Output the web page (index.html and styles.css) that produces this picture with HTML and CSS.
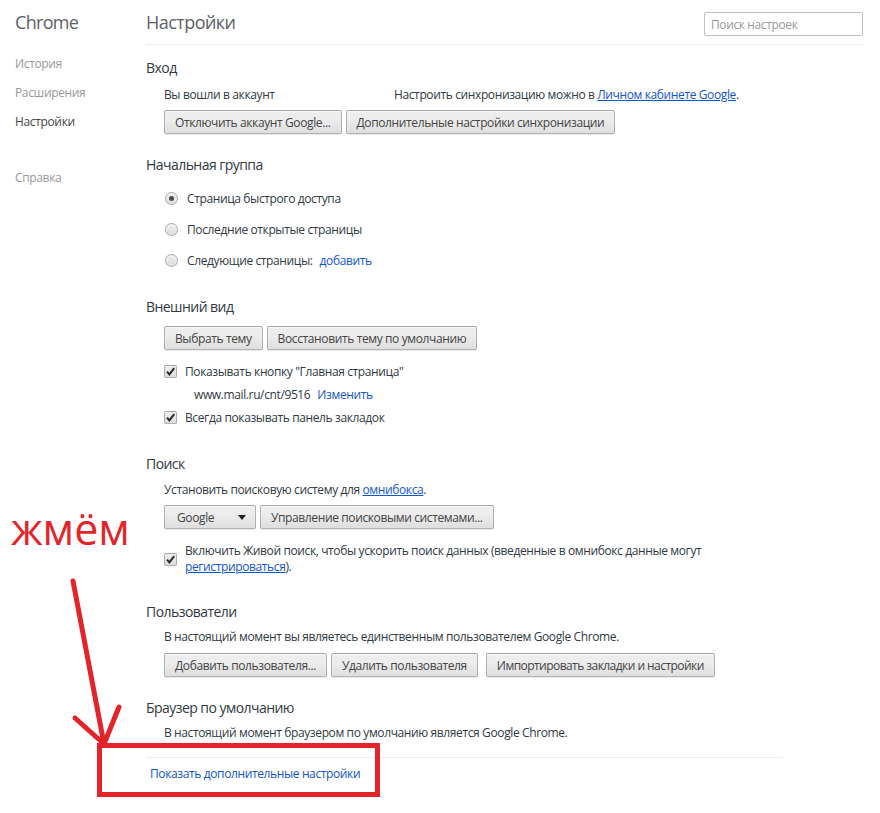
FILE: index.html
```html
<!DOCTYPE html>
<html lang="ru">
<head>
<meta charset="utf-8">
<title>Настройки</title>
<link rel="stylesheet" href="styles.css">
</head>
<body>
<div class="app">
  <nav class="sidebar">
    <div class="brand">Chrome</div>
    <ul class="nav">
      <li>История</li>
      <li>Расширения</li>
      <li class="active">Настройки</li>
      <li class="gap">Справка</li>
    </ul>
  </nav>
  <main class="page">
    <header class="page-header">
      <h1>Настройки</h1>
      <input class="search" type="text" placeholder="Поиск настроек">
    </header>

    <section class="section s-login">
      <h3>Вход</h3>
      <div class="body">
        <div class="row r-first"><span class="account">Вы вошли в аккаунт</span><span>Настроить синхронизацию можно в <a class="u" href="#">Личном кабинете Google</a>.</span></div>
        <div class="buttons b5"><button>Отключить аккаунт Google...</button><button>Дополнительные настройки синхронизации</button></div>
      </div>
    </section>

    <section class="section s-start">
      <h3>Начальная группа</h3>
      <div class="body radios">
        <div class="radio-row"><span class="radio checked"></span>Страница быстрого доступа</div>
        <div class="radio-row"><span class="radio"></span>Последние открытые страницы</div>
        <div class="radio-row"><span class="radio"></span>Следующие страницы:<a class="add" href="#">добавить</a></div>
      </div>
    </section>

    <section class="section s-look">
      <h3>Внешний вид</h3>
      <div class="body">
        <div class="buttons b9"><button>Выбрать тему</button><button>Восстановить тему по умолчанию</button></div>
        <div class="checks">
          <div class="check-row"><span class="checkbox"><svg viewBox="0 0 13 13" width="13" height="13"><path d="M3 6.6 L5.4 9.4 L10.2 3.2" fill="none" stroke="#2a2a2a" stroke-width="2"/></svg></span>Показывать кнопку "Главная страница"</div>
          <div class="check-row home-url">www.mail.ru/cnt/9516<a class="add" href="#">Изменить</a></div>
          <div class="check-row"><span class="checkbox"><svg viewBox="0 0 13 13" width="13" height="13"><path d="M3 6.6 L5.4 9.4 L10.2 3.2" fill="none" stroke="#2a2a2a" stroke-width="2"/></svg></span>Всегда показывать панель закладок</div>
        </div>
      </div>
    </section>

    <section class="section s-search">
      <h3>Поиск</h3>
      <div class="body">
        <div class="row r-first6">Установить поисковую систему для <a class="u" href="#">омнибокса</a>.</div>
        <div class="buttons b5">
          <div class="select">Google<svg class="caret" viewBox="0 0 8 5" width="8" height="5"><path d="M0 0 H8 L4 5 Z" fill="#222"/></svg></div>
          <button>Управление поисковыми системами...</button>
        </div>
        <div class="live">
          <span class="checkbox"><svg viewBox="0 0 13 13" width="13" height="13"><path d="M3 6.6 L5.4 9.4 L10.2 3.2" fill="none" stroke="#2a2a2a" stroke-width="2"/></svg></span>
          <span class="live-text">Включить Живой поиск, чтобы ускорить поиск данных (введенные в омнибокс данные могут<br><a class="u" href="#">регистрироваться</a>).</span>
        </div>
      </div>
    </section>

    <section class="section s-users">
      <h3>Пользователи</h3>
      <div class="body">
        <div class="row r-first5">В настоящий момент вы являетесь единственным пользователем Google Chrome.</div>
        <div class="buttons b6"><button>Добавить пользователя...</button><button>Удалить пользователя</button><button class="tight">Импортировать закладки и настройки</button></div>
      </div>
    </section>

    <section class="section s-default">
      <h3>Браузер по умолчанию</h3>
      <div class="body">
        <div class="row r-first5">В настоящий момент браузером по умолчанию является Google Chrome.</div>
      </div>
    </section>

    <footer class="more">
      <a href="#">Показать дополнительные настройки</a>
    </footer>
  </main>
</div>

<div class="annotation">
  <div class="press">жмём</div>
  <svg class="marks" viewBox="0 0 880 813" width="880" height="813">
    <g stroke="#e3242b" stroke-width="5" stroke-linecap="round" fill="none">
      <line x1="73" y1="581" x2="104" y2="744"/>
      <line x1="75" y1="718" x2="104" y2="744"/>
      <line x1="119" y1="707" x2="104" y2="744"/>
      <rect x="99.5" y="745.5" width="278" height="49" stroke-linecap="butt"/>
    </g>
  </svg>
</div>
</body>
</html>
```

FILE: styles.css
```css
* { box-sizing: border-box; }
html, body { margin: 0; padding: 0; background: #fff; }
body {
  position: relative;
  width: 880px;
  height: 813px;
  overflow: hidden;
  font-family: "Open Sans", "Noto Sans", sans-serif;
  font-size: 12px;
  letter-spacing: -0.38px;
  color: #303942;
}
a { color: #15c; text-decoration: none; }
a.u { text-decoration: underline; }

.app { display: flex; align-items: flex-start; }

.sidebar { width: 146px; flex: none; padding-left: 15px; }
.brand { margin-top: 10px; font-size: 18px; line-height: 24px; letter-spacing: -0.7px; color: #5c6166; }
.nav { list-style: none; margin: 15px 0 0; padding: 0; }
.nav li { line-height: 29px; font-size: 12px; letter-spacing: -0.35px; color: #999; }
.nav li.active { color: #464646; }
.nav li.gap { margin-top: 27px; }

.page { flex: none; width: 717px; }
.page-header {
  height: 45px;
  display: flex;
  justify-content: space-between;
  align-items: flex-start;
  border-bottom: 1px solid #eee;
}
.page-header h1 {
  margin: 10px 0 0;
  font-size: 18px;
  line-height: 24px;
  letter-spacing: -0.55px;
  font-weight: normal;
  color: #5c6166;
}
.search {
  margin-top: 12px;
  width: 159px;
  height: 24px;
  border: 1px solid #bfbfbf;
  border-radius: 2px;
  padding: 0 6px;
  font: inherit;
  font-size: 12px;
  letter-spacing: -0.38px;
  color: #333;
  outline: none;
}
.search::placeholder { color: #999; }

.section h3 {
  margin: 0;
  font-size: 14px;
  line-height: 20px;
  letter-spacing: -0.55px;
  font-weight: normal;
  color: #303942;
}
.section .body { padding-left: 18px; }
.s-login { margin-top: 13px; }
.s-start { margin-top: 21px; }
.s-look { margin-top: 21px; }
.s-search { margin-top: 25px; }
.s-users { margin-top: 27px; }
.s-default { margin-top: 21px; }

.row { line-height: 20px; white-space: nowrap; }
.r-first { margin-top: 7px; }
.r-first6 { margin-top: 6px; }
.r-first5 { margin-top: 5px; }
.account { display: inline-block; width: 230px; }

.buttons { display: flex; gap: 4px; }
.b5 { margin-top: 5px; }
.b6 { margin-top: 6px; }
.b9 { margin-top: 9px; }
button, .select {
  height: 24px;
  padding: 0 10px;
  font: inherit;
  font-size: 12px;
  letter-spacing: -0.38px;
  color: #444;
  border: 1px solid rgba(0,0,0,0.25);
  border-radius: 2px;
  background: linear-gradient(#ededed, #ededed 38%, #dedede);
  box-shadow: 0 1px 0 rgba(0,0,0,0.08), inset 0 1px 2px rgba(255,255,255,0.75);
  white-space: nowrap;
}
button.tight { margin-left: 4px; letter-spacing: -0.55px; }
.select {
  width: 92px;
  display: flex;
  align-items: center;
  justify-content: space-between;
  padding: 0 9px 0 12px;
}

.radios { margin-top: 8px; }
.radio-row { height: 31px; display: flex; align-items: center; }
.radio {
  width: 13px; height: 13px;
  margin: 0 9px 0 1px;
  border-radius: 50%;
  border: 1px solid rgba(0,0,0,0.25);
  background: linear-gradient(#ededed, #dedede);
  box-shadow: inset 0 1px 2px rgba(255,255,255,0.75);
  display: flex; align-items: center; justify-content: center;
}
.radio.checked::after {
  content: "";
  width: 5px; height: 5px;
  border-radius: 50%;
  background: #4a4a4a;
}
.add { margin-left: 7px; }

.checks { margin-top: 10px; }
.check-row { height: 23px; display: flex; align-items: center; }
.checkbox {
  width: 13px; height: 13px;
  margin-right: 8px;
  flex: none;
  border-radius: 2px;
  border: 1px solid rgba(0,0,0,0.25);
  background: linear-gradient(#ededed, #dedede);
  position: relative;
  overflow: visible;
}
.checkbox svg { position: absolute; left: -1px; top: -1px; }
.home-url { padding-left: 30px; color: #303942; }

.live { margin-top: 14px; display: flex; align-items: center; }
.live-text { line-height: 16px; }

.more {
  margin-top: 14px;
  width: 637px;
  border-top: 1px solid #eee;
  padding: 6px 0 0 4px;
  line-height: 20px;
}

.annotation { position: absolute; left: 0; top: 0; width: 880px; height: 813px; pointer-events: none; }
.press {
  position: absolute;
  left: 11px;
  top: 501px;
  font-family: "Open Sans", "Noto Sans", sans-serif;
  font-size: 43px;
  line-height: 56px;
  letter-spacing: 0;
  color: #e3242b;
}
.marks { position: absolute; left: 0; top: 0; }
```
